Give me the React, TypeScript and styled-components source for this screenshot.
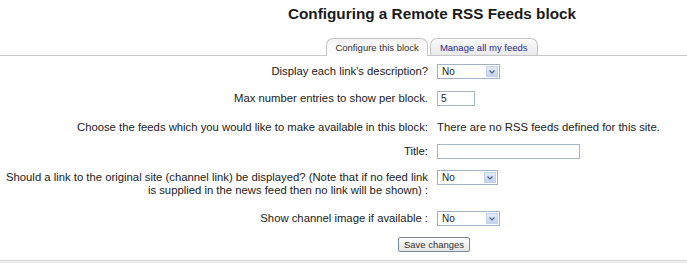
import React from "react";
import styled, { createGlobalStyle } from "styled-components";

const Global = createGlobalStyle`
  html, body { margin: 0; padding: 0; background: #fff; overflow: hidden; }
  body { font-family: "Liberation Sans", Arial, sans-serif; color: #222; }
`;

const Page = styled.div`
  width: 687px;
  display: flex;
  flex-direction: column;
`;

/* The original page is wider than the frame; its centre lies at x=432. */
const Centered = styled.div`
  padding-left: 177px;
  display: flex;
  justify-content: center;
`;

const Heading = styled.h2`
  margin: 4px 0 0;
  font-size: 15.3px;
  line-height: 20px;
  font-weight: bold;
  text-align: center;
  color: #1a1a1a;
  white-space: nowrap;
`;

const TabBar = styled(Centered)`
  margin-top: 14px;
  gap: 2px;
  border-bottom: 1px solid #c8c8c8;
`;

const Tab = styled.div<{ $active?: boolean }>`
  padding: 0 ${(p) => (p.$active ? 8 : 9)}px;
  display: flex;
  align-items: center;
  font-size: 9.5px;
  border: 1px solid #c4c4c4;
  border-bottom: none;
  border-radius: 7px 7px 0 0;
  white-space: nowrap;
  color: ${(p) => (p.$active ? "#333" : "#2b2b8f")};
  background: ${(p) =>
    p.$active
      ? "linear-gradient(#f4f4f4, #ffffff)"
      : "linear-gradient(#fafafa, #e9e9e9)"};
  margin-bottom: ${(p) => (p.$active ? "-1px" : "0")};
  height: ${(p) => (p.$active ? "17px" : "16px")};
`;

const Form = styled.div`
  display: flex;
  flex-direction: column;
`;

const Row = styled.div<{ $gap: number }>`
  display: grid;
  grid-template-columns: 428px 1fr;
  column-gap: 9px;
  align-items: start;
  margin-top: ${(p) => p.$gap}px;
`;

const Label = styled.div`
  text-align: right;
  font-size: 11.3px;
  line-height: 13px;
  padding-top: 1px;
  color: #222;
`;

const Value = styled.div`
  font-size: 11.3px;
  line-height: 15px;
  color: #222;
  white-space: nowrap;
`;

const SelectBox = styled.div<{ $w: number }>`
  width: ${(p) => p.$w}px;
  height: 15px;
  box-sizing: border-box;
  border: 1px solid #9fb2c8;
  display: flex;
  align-items: center;
  justify-content: space-between;
  background: #fff;
  font-size: 10px;
  padding-left: 4px;
`;

const Arrow = styled.span`
  width: 12px;
  height: 11px;
  margin-right: 1px;
  background: linear-gradient(#e4ecf8, #c3d3ee);
  border: 1px solid #c5d4ea;
  box-sizing: border-box;
  display: flex;
  align-items: center;
  justify-content: center;
`;

const TextInput = styled.div<{ $w: number }>`
  width: ${(p) => p.$w}px;
  height: 15px;
  box-sizing: border-box;
  border: 1px solid #a9b8c9;
  font-size: 10px;
  line-height: 13px;
  padding-left: 3px;
  background: #fff;
`;

const ButtonRow = styled(Centered)`
  margin-top: 11px;
  padding-left: 181px;
`;

const Button = styled.div`
  height: 15px;
  box-sizing: border-box;
  padding: 0 5px;
  border: 1px solid #7b8a9a;
  border-radius: 2px;
  background: linear-gradient(#fdfdfd, #e6e6e6);
  font-size: 9.5px;
  line-height: 13px;
  color: #333;
  white-space: nowrap;
`;

const Footer = styled.div`
  margin-top: 8px;
  height: 6px;
  border-top: 1px solid #d8d8d8;
  background: #ededed;
`;

const Select = ({ w }: { w: number }) => (
  <SelectBox $w={w}>
    <span>No</span>
    <Arrow>
      <svg width="6" height="4" viewBox="0 0 6 4">
        <path d="M0.5 0.5 L3 3 L5.5 0.5" stroke="#4d6185" strokeWidth="1.2" fill="none" />
      </svg>
    </Arrow>
  </SelectBox>
);

export default function App() {
  return (
    <>
      <Global />
      <Page>
        <Centered>
          <Heading>Configuring a Remote RSS Feeds block</Heading>
        </Centered>
        <TabBar>
          <Tab $active>Configure this block</Tab>
          <Tab>Manage all my feeds</Tab>
        </TabBar>
        <Form>
          <Row $gap={8}>
            <Label>Display each link's description?</Label>
            <Select w={63} />
          </Row>
          <Row $gap={12}>
            <Label>Max number entries to show per block.</Label>
            <TextInput $w={38}>5</TextInput>
          </Row>
          <Row $gap={14}>
            <Label>Choose the feeds which you would like to make available in this block:</Label>
            <Value>There are no RSS feeds defined for this site.</Value>
          </Row>
          <Row $gap={9}>
            <Label>Title:</Label>
            <TextInput $w={143} />
          </Row>
          <Row $gap={11}>
            <Label>
              Should a link to the original site (channel link) be displayed? (Note that if no feed link is
              supplied in the news feed then no link will be shown) :
            </Label>
            <Select w={61} />
          </Row>
          <Row $gap={14}>
            <Label>Show channel image if available :</Label>
            <Select w={63} />
          </Row>
          <ButtonRow>
            <Button>Save changes</Button>
          </ButtonRow>
        </Form>
        <Footer />
      </Page>
    </>
  );
}
